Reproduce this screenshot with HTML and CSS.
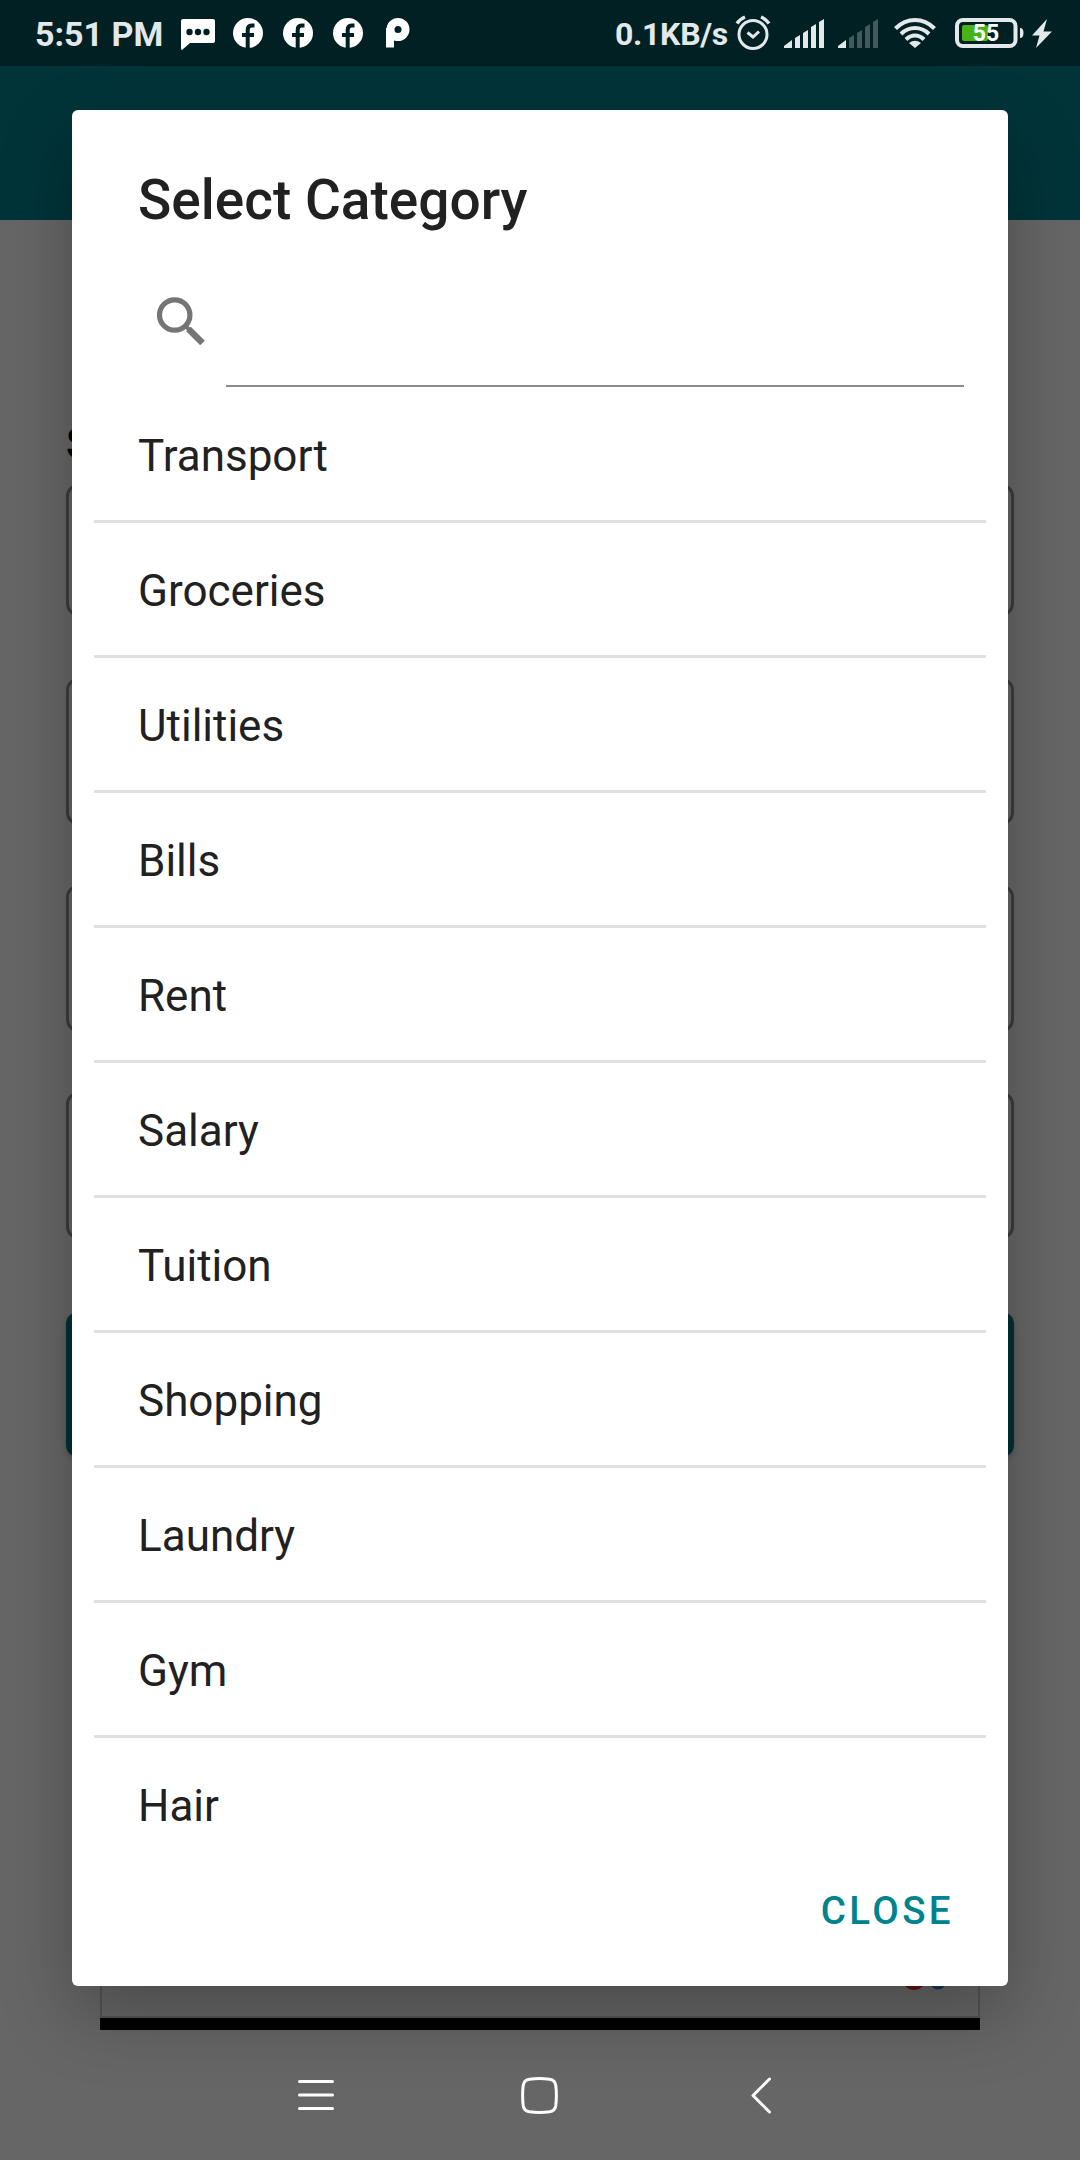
FILE: index.html
```html
<!DOCTYPE html>
<html lang="en">
<head>
  <meta charset="UTF-8" />
  <meta name="viewport" content="width=device-width, initial-scale=1" />
  <title>Select Category</title>
  <link rel="stylesheet" href="styles.css">
</head>
<body>
  <div class="screen">
    <!-- form behind the dialog -->
    <div class="page">
      <div class="page-status"></div>
      <div class="app-bar"></div>
      <div class="form">
        <h2 class="form-title">S</h2>
        <div class="field field-first"></div>
        <div class="field"></div>
        <div class="field"></div>
        <div class="field"></div>
        <div class="submit"></div>
      </div>
      <div class="ad">
        <div class="ad-body">
          <svg width="44" height="24" viewBox="0 0 44 24">
            <circle cx="13" cy="12" r="12" fill="#ea3a35"/>
            <circle cx="37" cy="15.500" r="8" fill="#4a7fe8"/>
          </svg>
        </div>
      </div>
    </div>

    <div class="overlay">
      <div class="status-bar">
        <span class="time">5:51 PM</span>
        <div class="notifications">
          <svg width="34" height="32" viewBox="0 0 34 32">
            <path d="M2 0H32Q34 0 34 2V22Q34 24 32 24H9L1 31Q0 31 0 29V2Q0 0 2 0Z" fill="#fff"/>
            <g fill="#002024"><circle cx="8.500" cy="13" r="3.200"/><circle cx="17" cy="13" r="3.200"/><circle cx="25.500" cy="13" r="3.200"/></g>
          </svg>
          <svg width="30" height="30" viewBox="0 0 30 30">
            <circle cx="15" cy="15" r="15" fill="#fff"/>
            <path d="M14.700 30V12Q14.700 7.500 18.500 7.500H21.500M9 17H21" fill="none" stroke="#002024" stroke-width="4"/>
          </svg>
          <svg width="30" height="30" viewBox="0 0 30 30">
            <circle cx="15" cy="15" r="15" fill="#fff"/>
            <path d="M14.700 30V12Q14.700 7.500 18.500 7.500H21.500M9 17H21" fill="none" stroke="#002024" stroke-width="4"/>
          </svg>
          <svg width="30" height="30" viewBox="0 0 30 30">
            <circle cx="15" cy="15" r="15" fill="#fff"/>
            <path d="M14.700 30V12Q14.700 7.500 18.500 7.500H21.500M9 17H21" fill="none" stroke="#002024" stroke-width="4"/>
          </svg>
          <svg class="p-logo" width="24" height="30" viewBox="0 0 24 30">
            <circle cx="12" cy="11.500" r="7.500" fill="none" stroke="#fff" stroke-width="8"/>
            <rect x="0" y="10" width="8" height="19.500" fill="#fff"/>
          </svg>
        </div>
        <div class="system">
          <span class="speed">0.1KB/s</span>
          <svg class="alarm" width="36" height="36" viewBox="0 0 36 36" fill="none" stroke="#e3e9ea">
            <circle cx="18" cy="19.500" r="14" stroke-width="3"/>
            <path d="M12.500 17.500L18 22L24 16.500" stroke-width="3"/>
            <path d="M2 8.500Q5 4 10 2M26 2Q31 4 34 8.500" stroke-width="3.500"/>
          </svg>
          <svg class="signal" width="40" height="29" viewBox="0 0 40 29" fill="#e3e9ea">
            <path d="M0 29V27L8 21V29ZM11 19L16 16V29H11ZM19 14L24 11V29H19ZM27 8L32 5V29H27ZM35 3L40 0V29H35Z"/>
          </svg>
          <svg class="signal-weak" width="40" height="29" viewBox="0 0 40 29" fill="#44595c">
            <path d="M0 29V27L8 21V29Z" fill="#e3e9ea"/>
            <path d="M11 19L16 16V29H11ZM19 14L24 11V29H19ZM27 8L32 5V29H27ZM35 3L40 0V29H35Z"/>
          </svg>
          <svg class="wifi" width="42" height="30" viewBox="0 0 42 30" fill="none" stroke="#e3e9ea" stroke-width="4">
            <path d="M1.500 10.500Q10 2 21 2T40.500 10.500M7 16Q13 10 21 10T35 16M12 21.500Q16 17.500 21 17.500T30 21.500"/>
            <path d="M21 30L15 25Q21 20.500 27 25Z" fill="#e3e9ea" stroke="none"/>
          </svg>
          <svg class="battery" width="69" height="30" viewBox="0 0 69 30">
            <rect x="2" y="2" width="58.500" height="26" rx="6" fill="none" stroke="#e3e9ea" stroke-width="4"/>
            <rect x="7" y="7" width="26" height="16" rx="2" fill="#48b216"/>
            <path d="M65 10Q68.500 10 68.500 15T65 20Z" fill="#e3e9ea"/>
            <text class="battery-level" x="31" y="23" text-anchor="middle">55</text>
          </svg>
          <svg class="bolt" width="20" height="29" viewBox="0 0 20 29">
            <path d="M15 0L0 16.500H7.500L4 29L20 12.500H11.500Z" fill="#e3e9ea"/>
          </svg>
        </div>
      </div>

      <div class="dialog">
        <h1 class="dialog-title">Select Category</h1>
        <div class="search">
          <svg width="48" height="48" viewBox="0 0 48 48" fill="none" stroke="#757575">
            <circle cx="17.700" cy="18" r="15.200" stroke-width="5.200"/>
            <path d="M31.500 32L45.500 46" stroke-width="6.500"/>
            <path d="M28 28.500L34 34.500" stroke-width="4"/>
          </svg>
          <input class="search-input" type="text" aria-label="Search">
        </div>
        <ul class="list">
          <li>Transport</li>
          <li>Groceries</li>
          <li>Utilities</li>
          <li>Bills</li>
          <li>Rent</li>
          <li>Salary</li>
          <li>Tuition</li>
          <li>Shopping</li>
          <li>Laundry</li>
          <li>Gym</li>
          <li>Hair</li>
        </ul>
        <div class="actions">
          <button class="close">CLOSE</button>
        </div>
      </div>

      <div class="nav-bar">
        <svg width="36" height="36" viewBox="0 0 36 36">
          <path d="M1.500 4.500H34.500M1.500 18H34.500M1.500 31.500H34.500" stroke-width="3"/>
        </svg>
        <svg class="home" width="37" height="37" viewBox="0 0 37 37">
          <path d="M8.500 2.200Q18.500 1 28.500 2.200Q34 2.800 34.800 8.500Q36 18.500 34.800 28.500Q34 34 28.500 34.800Q18.500 36 8.500 34.800Q3 34 2.200 28.500Q1 18.500 2.200 8.500Q3 2.800 8.500 2.200Z" stroke-width="3"/>
        </svg>
        <svg width="20" height="37" viewBox="0 0 20 37">
          <path d="M18.500 2L2 18.500L18.500 35" stroke-width="3"/>
        </svg>
      </div>
    </div>
  </div>
</body>
</html>
```
FILE: styles.css
```css
* {
  box-sizing: border-box;
}

body {
  margin: 0;
  font-family: Roboto, sans-serif;
  background: #fff;
}

svg {
  display: block;
  flex-shrink: 0;
}

.screen {
  position: relative;
  width: 1080px;
  height: 2160px;
  overflow: hidden;
}

/* page under the scrim */
.page {
  display: flex;
  flex-direction: column;
  height: 100%;
}

.page-status {
  height: 66px;
  background: #00505a;
}

.app-bar {
  height: 154px;
  background: #00838f;
}

.form {
  display: flex;
  flex-direction: column;
  padding: 198px 66px 0;
}

.form-title {
  margin: 0;
  font-size: 44px;
  line-height: 52px;
  color: #000;
}

.field {
  height: 147px;
  margin-bottom: 60px;
  border: 3px solid #969696;
  border-radius: 12px;
}

.field-first {
  height: 132px;
  margin-top: 14px;
  margin-bottom: 62px;
}

.submit {
  height: 145px;
  margin-top: 13px;
  border-radius: 12px;
  background: #007a78;
  box-shadow: 0 3px 6px rgba(0, 0, 0, 0.2);
}

.ad {
  width: 880px;
  height: 130px;
  margin: auto 100px 130px;
  background: #000;
}

.ad-body {
  display: flex;
  justify-content: flex-end;
  height: 118px;
  padding: 64px 33px 0 0;
  border: 2px solid #cfcfcf;
  background: #fff;
}

/* scrim, dialog and system bars */
.overlay {
  position: absolute;
  inset: 0;
  display: flex;
  flex-direction: column;
  background: rgba(0, 0, 0, 0.6);
}

.status-bar {
  display: flex;
  align-items: center;
  height: 66px;
  padding: 0 28px 0 35px;
  font-size: 34px;
  font-weight: 700;
  color: #e3e9ea;
}

.time {
  width: 146px;
  padding-top: 1px;
  white-space: nowrap;
}

.speed {
  padding-top: 1px;
  font-size: 32px;
  letter-spacing: -0.3px;
}

.notifications {
  display: flex;
  align-items: center;
  gap: 20px;
}

.notifications svg:first-child {
  margin: 4px -2px 0 0;
}

.p-logo {
  margin-left: 3px;
}

.system {
  display: flex;
  align-items: center;
  margin-left: auto;
}

.alarm {
  margin-left: 7px;
}

.signal {
  margin-left: 13px;
}

.signal-weak {
  margin-left: 14px;
}

.wifi {
  margin-left: 16px;
}

.battery {
  margin-left: 19px;
}

.battery-level {
  font-size: 23px;
  font-weight: 700;
  fill: #fff;
}

.bolt {
  margin-left: 8px;
}

.dialog {
  display: flex;
  flex-direction: column;
  width: 936px;
  height: 1876px;
  margin: 44px 72px 0;
  background: #fff;
  border-radius: 6px;
  box-shadow: 0 28px 70px rgba(0, 0, 0, 0.27);
}

.dialog-title {
  margin: 0;
  padding: 58px 66px 0;
  font-size: 55px;
  font-weight: 500;
  line-height: 64px;
  color: #212121;
}

.search {
  display: flex;
  height: 156px;
  padding: 0 44px 0 85px;
}

.search svg {
  margin-top: 65px;
}

.search-input {
  flex: 1;
  min-width: 0;
  height: 155px;
  margin-left: 21px;
  padding: 0;
  border: none;
  border-bottom: 2px solid #8a8a8a;
  background: none;
  font: 44px Roboto, sans-serif;
  outline: none;
}

.list {
  height: 1455px;
  margin: 0;
  padding: 0 22px;
  overflow: hidden;
  list-style: none;
}

.list li {
  height: 135px;
  padding: 0 44px;
  border-bottom: 3px solid #e0e0e0;
  font-size: 44px;
  line-height: 136px;
  color: #212121;
}

.list li:last-child {
  border-bottom: none;
}

.actions {
  display: flex;
  justify-content: flex-end;
  padding: 18px 24px;
}

.close {
  height: 99px;
  padding: 0 30px;
  border: none;
  background: none;
  font-family: Roboto, sans-serif;
  font-size: 38.5px;
  font-weight: 500;
  letter-spacing: 3.4px;
  color: #00838f;
}

.nav-bar {
  display: flex;
  align-items: center;
  height: 130px;
  margin-top: auto;
  padding: 0 309px 0 298px;
}

.nav-bar svg {
  fill: none;
  stroke: #fff;
  stroke-linecap: round;
  stroke-linejoin: round;
}

.nav-bar .home {
  margin: 0 auto 0 187px;
}
```
